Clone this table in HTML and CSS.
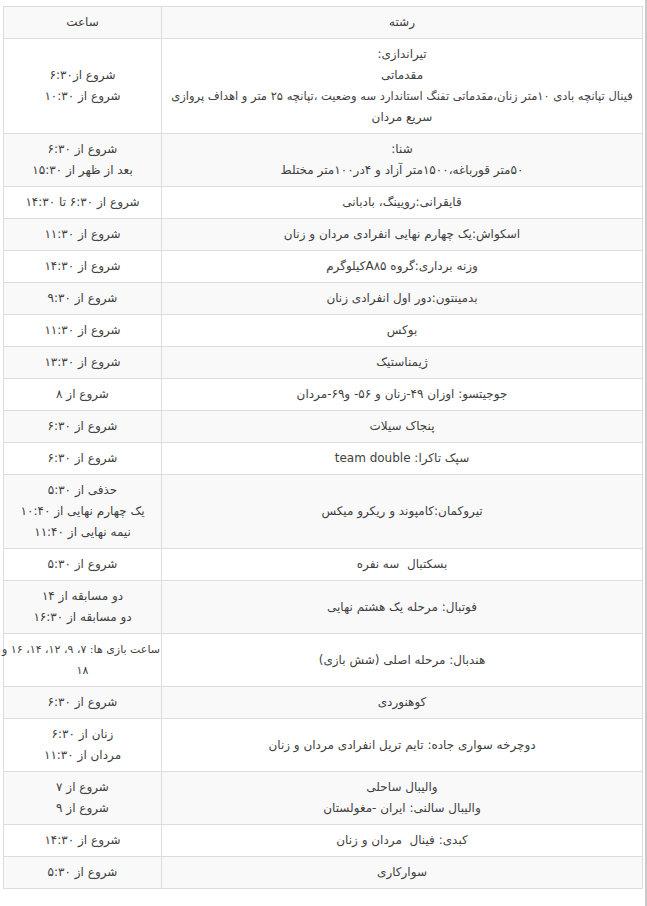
FILE: index.html
```html
<!DOCTYPE html>
<html lang="fa" dir="rtl">
<head>
<meta charset="utf-8">
<title>برنامه مسابقات</title>
<link rel="stylesheet" href="styles.css">
</head>
<body>
<div class="page">
<table class="schedule">
<colgroup><col class="col-field"><col class="col-time"></colgroup>
<thead>
<tr><th>رشته</th><th>ساعت</th></tr>
</thead>
<tbody>
<tr><td>تیراندازی:<br>مقدماتی<br><span class="long">فینال تپانچه بادی ۱۰متر زنان،مقدماتی تفنگ استاندارد سه وضعیت ،تپانچه ۲۵ متر و اهداف پروازی</span><br>سریع مردان</td><td>شروع از۶:۳۰<br>شروع از ۱۰:۳۰</td></tr>
<tr><td>شنا:<br>۵۰متر قورباغه،۱۵۰۰متر آزاد و ۴در۱۰۰متر مختلط</td><td>شروع از ۶:۳۰<br>بعد از ظهر از ۱۵:۳۰</td></tr>
<tr><td>قایقرانی:رویینگ، بادبانی</td><td>شروع از ۶:۳۰ تا ۱۴:۳۰</td></tr>
<tr><td>اسکواش:یک چهارم نهایی انفرادی مردان و زنان</td><td>شروع از ۱۱:۳۰</td></tr>
<tr><td>وزنه برداری:گروه A۸۵کیلوگرم</td><td>شروع از ۱۴:۳۰</td></tr>
<tr><td>بدمینتون:دور اول انفرادی زنان</td><td>شروع از ۹:۳۰</td></tr>
<tr><td>بوکس</td><td>شروع از ۱۱:۳۰</td></tr>
<tr><td>ژیمناستیک</td><td>شروع از ۱۳:۳۰</td></tr>
<tr><td>جوجیتسو: اوزان ۴۹-زنان و ۵۶- و۶۹-مردان</td><td>شروع از ۸</td></tr>
<tr><td>پنجاک سیلات</td><td>شروع از ۶:۳۰</td></tr>
<tr><td>سپک تاکرا: team double</td><td>شروع از ۶:۳۰</td></tr>
<tr><td>تیروکمان:کامپوند و ریکرو میکس</td><td>حذفی از ۵:۳۰<br>یک چهارم نهایی از ۱۰:۴۰<br>نیمه نهایی از ۱۱:۴۰</td></tr>
<tr><td>بسکتبال&nbsp; سه نفره</td><td>شروع از ۵:۳۰</td></tr>
<tr><td>فوتبال: مرحله یک هشتم نهایی</td><td>دو مسابقه از ۱۴<br>دو مسابقه از ۱۶:۳۰</td></tr>
<tr><td>هندبال: مرحله اصلی (شش بازی)</td><td class="tight">ساعت بازی ها: ۷، ۹، ۱۲، ۱۴، ۱۶ و<br>۱۸</td></tr>
<tr><td>کوهنوردی</td><td>شروع از ۶:۳۰</td></tr>
<tr><td>دوچرخه سواری جاده: تایم تریل انفرادی مردان و زنان</td><td>زنان از ۶:۳۰<br>مردان از ۱۱:۳۰</td></tr>
<tr><td>والیبال ساحلی<br>والیبال سالنی: ایران -مغولستان</td><td>شروع از ۷<br>شروع از ۹</td></tr>
<tr><td>کبدی: فینال&nbsp; مردان و زنان</td><td>شروع از ۱۴:۳۰</td></tr>
<tr><td>سوارکاری</td><td>شروع از ۵:۳۰</td></tr>
</tbody>
</table>
</div>
</body>
</html>
```

FILE: styles.css
```css
html, body {
  margin: 0;
  padding: 0;
  background: #ffffff;
}

.page {
  box-sizing: border-box;
  width: 647px;
  min-height: 906px;
  padding: 6px 2px 0 4px;
  border-right: 2px solid #c9c9c9;
  font-family: "DejaVu Sans", "Noto Sans", sans-serif;
  font-size: 12px;
  color: #3f3f3f;
}

.schedule {
  width: 640px;
  border-collapse: collapse;
  table-layout: fixed;
  border: 1px solid #dddddd;
}

.col-time {
  width: 158px;
}

.schedule th,
.schedule td {
  border: 1px solid #dddddd;
  padding: 5px 2px;
  line-height: 21px;
  text-align: center;
  vertical-align: middle;
  font-weight: normal;
}

.schedule thead th {
  background: #f9f9f9;
}

.schedule tbody tr:nth-child(even) td {
  background: #f9f9f9;
}

.long {
  white-space: nowrap;
  font-size: 11.5px;
}

.schedule td.tight {
  padding-left: 1px;
  padding-right: 1px;
  font-size: 11px;
  white-space: nowrap;
}
```
